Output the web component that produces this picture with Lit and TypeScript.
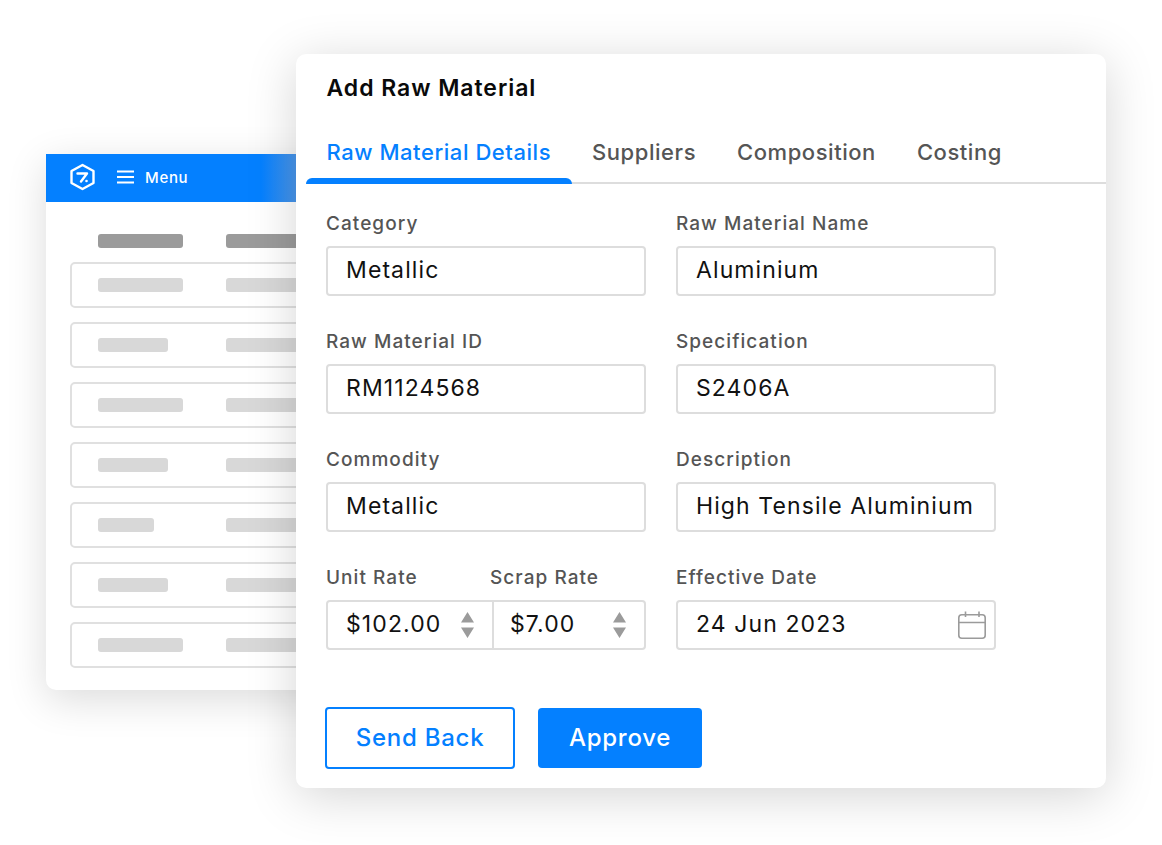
import { LitElement, html, css, svg } from "lit";
import { customElement } from "lit/decorators.js";

const BARS = [85, 70, 85, 70, 56, 70, 85];

const arrows = svg`<svg class="spin" width="13" height="26" viewBox="0 0 13 26"><path d="M6.5 0 L13 10.5 H0 Z M0 15.5 H13 L6.5 26 Z" fill="#9b9b9b"/></svg>`;

@customElement("app-root")
export class AppRoot extends LitElement {
  static styles = css`
    :host { display: block; position: relative; width: 1162px; height: 845px; overflow: hidden; background: #fff; font-family: Inter, "Liberation Sans", sans-serif; }
    .back { position: absolute; left: 46px; top: 154px; width: 320px; height: 536px; background: #fff; border-radius: 0 0 10px 10px; box-shadow: 0 10px 40px rgba(0,0,0,.14); overflow: hidden; }
    .bar { height: 48px; background: linear-gradient(90deg, #0480ff 215px, #4b96ea 250px); display: flex; align-items: center; padding-left: 23px; color: #fff; font-size: 15px; font-weight: 500; letter-spacing: .7px; padding-bottom: 2px; box-sizing: border-box; }
    .bar .logo { margin-right: 21px; }
    .bar .burger { margin-right: 11px; }
    .list { display: flex; flex-direction: column; gap: 14px; padding: 32px 0 0 24px; }
    .heads { display: flex; gap: 43px; padding-left: 28px; height: 14px; }
    .ph { height: 14px; border-radius: 3px; background: #d8d8d8; flex: none; }
    .heads .ph { background: #9b9b9b; width: 85px; }
    .row { height: 46px; box-sizing: border-box; border: 2px solid #e0e0e0; border-radius: 5px; width: 320px; display: flex; align-items: center; padding-left: 26px; }
    .cell1 { width: 128px; flex: none; }
    .cell2 { width: 85px; }
    .main { position: absolute; left: 296px; top: 54px; width: 810px; height: 734px; box-sizing: border-box; background: #fff; border-radius: 10px; box-shadow: 0 8px 50px rgba(0,0,0,.17); padding-top: 19px; }
    h1 { margin: 0 0 0 30.5px; font-size: 23px; line-height: 30px; font-weight: 600; color: #0a0a0a; letter-spacing: .95px; }
    .tabs { margin: 26px 0 0 10px; height: 53px; border-bottom: 2px solid #ddd; display: flex; }
    .tab { position: relative; font-size: 22px; line-height: 46px; font-weight: 500; color: #555; margin-left: 41px; height: 53px; letter-spacing: .55px; }
    .tab.first { margin-left: 20.5px; color: #0480ff; }
    .tab.first::after { content: ""; position: absolute; left: -20.5px; right: -20.5px; bottom: -2px; height: 6px; background: #0480ff; border-radius: 6px 6px 0 0; }
    form { display: grid; grid-template-columns: 320px 320px; column-gap: 30px; row-gap: 33px; margin: 27px 0 0 30px; }
    .f { display: flex; flex-direction: column; }
    label { font-size: 19px; line-height: 26px; font-weight: 500; color: #555; margin-bottom: 9px; display: block; letter-spacing: 1.05px; white-space: nowrap; }
    .in { height: 50px; box-sizing: border-box; border: 2px solid #ddd; border-radius: 4px; display: flex; align-items: center; padding: 0 8px 2px 18px; font-size: 23px; letter-spacing: 1.1px; font-weight: 400; color: #111; white-space: nowrap; justify-content: space-between; }
    .in svg { position: relative; top: 1px; }
    .pair { display: grid; grid-template-columns: 167px 153px; }
    .pair .a .in { border-radius: 4px 0 0 4px; border-right: 1px solid #ddd; padding-right: 18px; }
    .pair .b .in { border-radius: 0 4px 4px 0; border-left: 1px solid #ddd; padding: 0 18px 2px 16px; }
    .pair .b label { margin-left: -3px; }
    .actions { display: flex; align-items: center; gap: 23px; margin: 57px 0 0 29px; }
    button { font: inherit; font-size: 24px; font-weight: 500; border-radius: 4px; box-sizing: border-box; letter-spacing: .75px; padding: 0 0 2px; }
    .ghost { width: 190px; height: 62px; border: 2px solid #0480ff; background: #fff; color: #0480ff; }
    .solid { width: 164px; height: 60px; border: 0; background: #0480ff; color: #fff; }
  `;

  field(label: string, value: string) {
    return html`<div class="f"><label>${label}</label><div class="in">${value}</div></div>`;
  }

  render() {
    return html`
      <div class="back">
        <div class="bar">
          <svg class="logo" width="27" height="28" viewBox="0 0 27 28" fill="none" stroke="#fff"><path d="M13.5 2 L24.5 8 V20 L13.5 26 L2.5 20 V8 Z" stroke-width="2.4" stroke-linejoin="round"/><path d="M8.5 10.5 H18 L12 18.5" stroke-width="2.4" stroke-linecap="round" stroke-linejoin="round"/><circle cx="17.5" cy="18" r="1.3" fill="#fff" stroke="none"/></svg>
          <svg class="burger" width="17" height="14" viewBox="0 0 17 14" stroke="#fff" stroke-width="2"><path d="M0 1.5 H17 M0 7 H17 M0 12.5 H17"/></svg>
          Menu
        </div>
        <div class="list">
          <div class="heads"><div class="ph"></div><div class="ph"></div></div>
          ${BARS.map((w) => html`<div class="row"><div class="cell1"><div class="ph" style="width:${w}px"></div></div><div class="ph cell2"></div></div>`)}
        </div>
      </div>
      <div class="main">
        <h1>Add Raw Material</h1>
        <div class="tabs">
          <div class="tab first">Raw Material Details</div>
          <div class="tab">Suppliers</div>
          <div class="tab">Composition</div>
          <div class="tab">Costing</div>
        </div>
        <form>
          ${this.field("Category", "Metallic")}
          ${this.field("Raw Material Name", "Aluminium")}
          ${this.field("Raw Material ID", "RM1124568")}
          ${this.field("Specification", "S2406A")}
          ${this.field("Commodity", "Metallic")}
          ${this.field("Description", "High Tensile Aluminium")}
          <div class="pair">
            <div class="a"><label>Unit Rate</label><div class="in">$102.00 ${arrows}</div></div>
            <div class="b"><label>Scrap Rate</label><div class="in">$7.00 ${arrows}</div></div>
          </div>
          <div class="f"><label>Effective Date</label><div class="in">24 Jun 2023
            <svg width="28" height="28" viewBox="0 0 28 28" fill="none" stroke="#9b9b9b" stroke-width="1.6"><rect x="0.8" y="3.8" width="26.4" height="23.4" rx="3"/><path d="M1 11.5 H27 M7.5 0.5 V6 M21 0.5 V6"/></svg>
          </div></div>
        </form>
        <div class="actions">
          <button class="ghost">Send Back</button>
          <button class="solid">Approve</button>
        </div>
      </div>
    `;
  }
}
